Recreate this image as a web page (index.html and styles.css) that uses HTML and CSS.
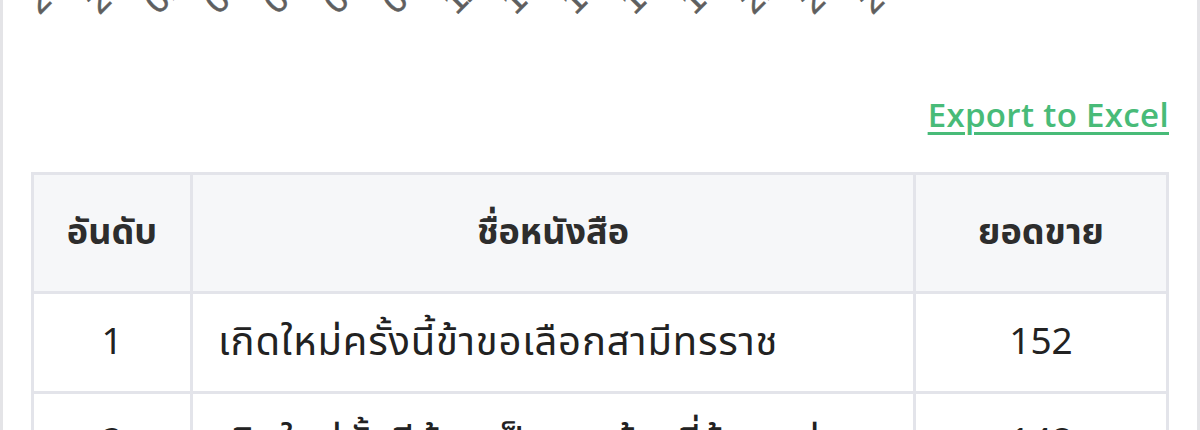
FILE: index.html
```html
<!DOCTYPE html>
<html lang="th">
<head>
    <meta charset="UTF-8">
    <meta name="viewport" content="width=device-width, initial-scale=1.0">
    <title>ยอดขายหนังสือ</title>
    <link rel="stylesheet" href="styles.css">
</head>
<body>
<div class="card">
    <div class="axis">
        <span class="tick"><span>27/09</span></span>
        <span class="tick"><span>29/09</span></span>
        <span class="tick"><span>01/10</span></span>
        <span class="tick"><span>03/10</span></span>
        <span class="tick"><span>05/10</span></span>
        <span class="tick"><span>07/10</span></span>
        <span class="tick"><span>09/10</span></span>
        <span class="tick"><span>11/10</span></span>
        <span class="tick"><span>13/10</span></span>
        <span class="tick"><span>15/10</span></span>
        <span class="tick"><span>17/10</span></span>
        <span class="tick"><span>19/10</span></span>
        <span class="tick"><span>21/10</span></span>
        <span class="tick"><span>23/10</span></span>
        <span class="tick"><span>25/10</span></span>
    </div>

    <div class="export">
        <a href="#" class="export-link">Export to Excel</a>
    </div>

    <table class="ranking">
        <thead>
            <tr>
                <th class="col-rank">อันดับ</th>
                <th>ชื่อหนังสือ</th>
                <th class="col-sales">ยอดขาย</th>
            </tr>
        </thead>
        <tbody>
            <tr>
                <td class="num">1</td>
                <td class="title">เกิดใหม่ครั้งนี้ข้าขอเลือกสามีทรราช</td>
                <td class="num">152</td>
            </tr>
            <tr>
                <td class="num">2</td>
                <td class="title">เกิดใหม่ทั้งทีต้องเป็นนางร้ายที่รู้ทุกอย่าง</td>
                <td class="num">148</td>
            </tr>
        </tbody>
    </table>
</div>
</body>
</html>
```

FILE: styles.css
```css
body {
    margin: 0;
    font-family: "Noto Sans Thai", Thonburi, Tahoma, "Noto Sans", "DejaVu Sans", sans-serif;
    background-color: #ffffff;
    color: #333;
}

.card {
    border-left: 3px solid #e4e4e7;
    border-right: 3px solid #e4e4e7;
    padding: 0 28px 40px;
    background-color: white;
}

/* bottom of the chart's x-axis, the rest is scrolled off */
.axis {
    display: flex;
    height: 19px;
    overflow: hidden;
    padding-left: 12px;
}

.tick {
    flex: 0 0 59.5px;
    min-width: 0;
    display: flex;
    align-items: flex-end;
}

.tick span {
    display: block;
    font-family: "Liberation Sans", Arial, sans-serif;
    font-size: 34px;
    line-height: 34px;
    color: #5f5f5f;
    -webkit-text-stroke: 0.6px #5f5f5f;
    white-space: nowrap;
    transform-origin: 0 100%;
    transform: rotate(-45deg);
}

.export {
    text-align: right;
    margin-top: 76px;
    line-height: 40px;
}

.export-link {
    font-family: "Open Sans", "Noto Sans", sans-serif;
    font-size: 33px;
    font-weight: 600;
    letter-spacing: 0.35px;
    color: #48bb78;
    text-decoration: underline;
    text-decoration-thickness: 3px;
    text-underline-offset: 5px;
}

.ranking {
    width: 100%;
    table-layout: fixed;
    margin-top: 30px;
    border-collapse: collapse;
    border: 3px solid #e3e4ea;
}

.ranking th,
.ranking td {
    border: 3px solid #e3e4ea;
}

.ranking th {
    height: 114px;
    background-color: #f6f7f9;
    font-size: 36px;
    font-weight: bold;
    color: #2d2d2d;
    text-align: center;
}

.ranking td {
    height: 97px;
    padding: 0 25px;
    color: #222;
    white-space: nowrap;
    overflow: hidden;
}

.col-rank {
    width: 154px;
}

.col-sales {
    width: 248px;
}

.title {
    font-size: 40px;
    letter-spacing: 0.8px;
}

.num {
    font-size: 37px;
    text-align: center;
}
```
